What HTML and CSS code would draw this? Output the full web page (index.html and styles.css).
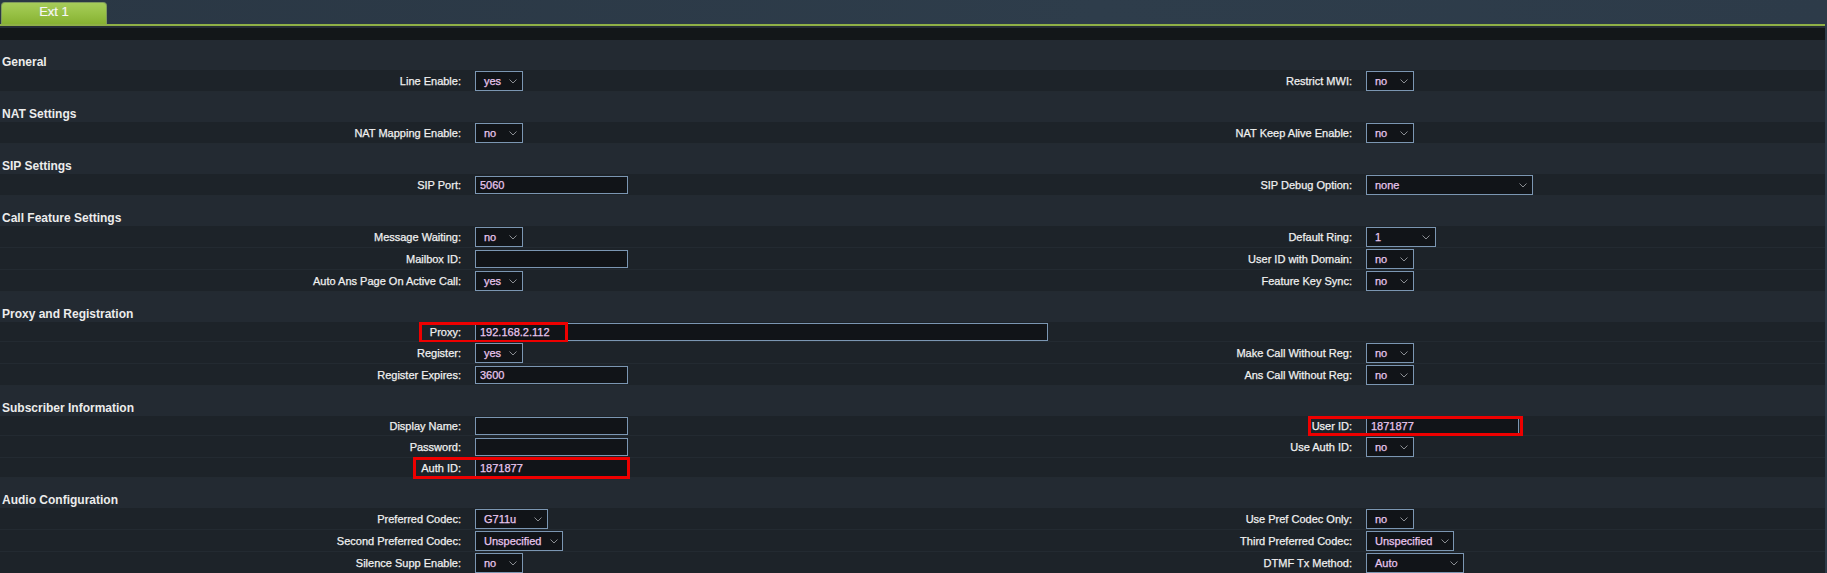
FILE: index.html
```html
<!DOCTYPE html>
<html>
<head>
<meta charset="utf-8">
<title>Ext 1</title>
<link rel="stylesheet" href="styles.css">
</head>
<body>
<div class="page">
  <div class="tabbar"><div class="tab">Ext 1</div></div>
  <div class="greenline"></div>
  <div class="gapline"></div>
  <div class="band"></div>
  <div class="form">

    <div class="sec">General</div>
    <div class="row">
      <div class="lbl">Line Enable:</div>
      <div class="fld"><span class="sel w48"><span>yes</span><svg class="chev" viewBox="0 0 8 5"><path d="M0.5 0.5 L4 4 L7.5 0.5"/></svg></span></div>
      <div class="lbl">Restrict MWI:</div>
      <div class="fld"><span class="sel w48"><span>no</span><svg class="chev" viewBox="0 0 8 5"><path d="M0.5 0.5 L4 4 L7.5 0.5"/></svg></span></div>
    </div>

    <div class="sec">NAT Settings</div>
    <div class="row">
      <div class="lbl">NAT Mapping Enable:</div>
      <div class="fld"><span class="sel w48"><span>no</span><svg class="chev" viewBox="0 0 8 5"><path d="M0.5 0.5 L4 4 L7.5 0.5"/></svg></span></div>
      <div class="lbl">NAT Keep Alive Enable:</div>
      <div class="fld"><span class="sel w48"><span>no</span><svg class="chev" viewBox="0 0 8 5"><path d="M0.5 0.5 L4 4 L7.5 0.5"/></svg></span></div>
    </div>

    <div class="sec">SIP Settings</div>
    <div class="row">
      <div class="lbl">SIP Port:</div>
      <div class="fld"><input class="txt" type="text" value="5060"></div>
      <div class="lbl">SIP Debug Option:</div>
      <div class="fld"><span class="sel w167"><span>none</span><svg class="chev" viewBox="0 0 8 5"><path d="M0.5 0.5 L4 4 L7.5 0.5"/></svg></span></div>
    </div>

    <div class="sec">Call Feature Settings</div>
    <div class="row">
      <div class="lbl">Message Waiting:</div>
      <div class="fld"><span class="sel w48"><span>no</span><svg class="chev" viewBox="0 0 8 5"><path d="M0.5 0.5 L4 4 L7.5 0.5"/></svg></span></div>
      <div class="lbl">Default Ring:</div>
      <div class="fld"><span class="sel w70"><span>1</span><svg class="chev" viewBox="0 0 8 5"><path d="M0.5 0.5 L4 4 L7.5 0.5"/></svg></span></div>
    </div>
    <div class="row">
      <div class="lbl">Mailbox ID:</div>
      <div class="fld"><input class="txt" type="text" value=""></div>
      <div class="lbl">User ID with Domain:</div>
      <div class="fld"><span class="sel w48"><span>no</span><svg class="chev" viewBox="0 0 8 5"><path d="M0.5 0.5 L4 4 L7.5 0.5"/></svg></span></div>
    </div>
    <div class="row">
      <div class="lbl">Auto Ans Page On Active Call:</div>
      <div class="fld"><span class="sel w48"><span>yes</span><svg class="chev" viewBox="0 0 8 5"><path d="M0.5 0.5 L4 4 L7.5 0.5"/></svg></span></div>
      <div class="lbl">Feature Key Sync:</div>
      <div class="fld"><span class="sel w48"><span>no</span><svg class="chev" viewBox="0 0 8 5"><path d="M0.5 0.5 L4 4 L7.5 0.5"/></svg></span></div>
    </div>

    <div class="sec">Proxy and Registration</div>
    <div class="row">
      <div class="lbl">Proxy:</div>
      <div class="fld"><input class="txt wide" type="text" value="192.168.2.112"></div>
      <div class="lbl"></div>
      <div class="fld"></div>
      <div class="mark mark-proxy"></div>
    </div>
    <div class="row">
      <div class="lbl">Register:</div>
      <div class="fld"><span class="sel w48"><span>yes</span><svg class="chev" viewBox="0 0 8 5"><path d="M0.5 0.5 L4 4 L7.5 0.5"/></svg></span></div>
      <div class="lbl">Make Call Without Reg:</div>
      <div class="fld"><span class="sel w48"><span>no</span><svg class="chev" viewBox="0 0 8 5"><path d="M0.5 0.5 L4 4 L7.5 0.5"/></svg></span></div>
    </div>
    <div class="row">
      <div class="lbl">Register Expires:</div>
      <div class="fld"><input class="txt" type="text" value="3600"></div>
      <div class="lbl">Ans Call Without Reg:</div>
      <div class="fld"><span class="sel w48"><span>no</span><svg class="chev" viewBox="0 0 8 5"><path d="M0.5 0.5 L4 4 L7.5 0.5"/></svg></span></div>
    </div>

    <div class="sec">Subscriber Information</div>
    <div class="row">
      <div class="lbl">Display Name:</div>
      <div class="fld"><input class="txt" type="text" value=""></div>
      <div class="lbl">User ID:</div>
      <div class="fld"><input class="txt" type="text" value="1871877"></div>
      <div class="mark mark-user"></div>
    </div>
    <div class="row">
      <div class="lbl">Password:</div>
      <div class="fld"><input class="txt" type="password" value=""></div>
      <div class="lbl">Use Auth ID:</div>
      <div class="fld"><span class="sel w48"><span>no</span><svg class="chev" viewBox="0 0 8 5"><path d="M0.5 0.5 L4 4 L7.5 0.5"/></svg></span></div>
    </div>
    <div class="row">
      <div class="lbl">Auth ID:</div>
      <div class="fld"><input class="txt" type="text" value="1871877"></div>
      <div class="lbl"></div>
      <div class="fld"></div>
      <div class="mark mark-auth"></div>
    </div>

    <div class="sec">Audio Configuration</div>
    <div class="row">
      <div class="lbl">Preferred Codec:</div>
      <div class="fld"><span class="sel w73"><span>G711u</span><svg class="chev" viewBox="0 0 8 5"><path d="M0.5 0.5 L4 4 L7.5 0.5"/></svg></span></div>
      <div class="lbl">Use Pref Codec Only:</div>
      <div class="fld"><span class="sel w48"><span>no</span><svg class="chev" viewBox="0 0 8 5"><path d="M0.5 0.5 L4 4 L7.5 0.5"/></svg></span></div>
    </div>
    <div class="row">
      <div class="lbl">Second Preferred Codec:</div>
      <div class="fld"><span class="sel w88"><span>Unspecified</span><svg class="chev" viewBox="0 0 8 5"><path d="M0.5 0.5 L4 4 L7.5 0.5"/></svg></span></div>
      <div class="lbl">Third Preferred Codec:</div>
      <div class="fld"><span class="sel w88"><span>Unspecified</span><svg class="chev" viewBox="0 0 8 5"><path d="M0.5 0.5 L4 4 L7.5 0.5"/></svg></span></div>
    </div>
    <div class="row">
      <div class="lbl">Silence Supp Enable:</div>
      <div class="fld"><span class="sel w48"><span>no</span><svg class="chev" viewBox="0 0 8 5"><path d="M0.5 0.5 L4 4 L7.5 0.5"/></svg></span></div>
      <div class="lbl">DTMF Tx Method:</div>
      <div class="fld"><span class="sel w98"><span>Auto</span><svg class="chev" viewBox="0 0 8 5"><path d="M0.5 0.5 L4 4 L7.5 0.5"/></svg></span></div>
    </div>
  </div>
</div>
</body>
</html>
```

FILE: styles.css
```css
html, body {
  margin: 0;
  padding: 0;
}

body {
  background: linear-gradient(90deg, #2a3744 0%, #2e3d4b 60%, #2d3b49 100%);
  font-family: "Liberation Sans", Arial, sans-serif;
  font-size: 11px;
  color: #ececec;
  overflow: hidden;
}

.page {
  width: 1825px;
}

.tabbar {
  height: 24px;
  padding-left: 1px;
  display: flex;
  align-items: flex-end;
  box-sizing: border-box;
}

.tab {
  width: 106px;
  height: 22px;
  box-sizing: border-box;
  border: 1px solid #7f9a5c;
  border-bottom: none;
  border-radius: 4px 4px 0 0;
  background: linear-gradient(180deg, #a6cc5a 0%, #97c145 50%, #87b132 100%);
  color: #f6f6f6;
  font-size: 13px;
  line-height: 18px;
  text-align: center;
  -webkit-text-stroke: 0.2px #f6f6f6;
}

.greenline {
  height: 2px;
  background: #8fb046;
}

.gapline {
  height: 2px;
  background: #262e35;
}

.band {
  height: 12px;
  background: #131719;
}

.form {
  background: #232a32;
  padding-bottom: 40px;
}

.sec {
  height: 30px;
  box-sizing: border-box;
  padding: 15px 0 0 2px;
  font-size: 12px;
  line-height: 14px;
  font-weight: bold;
  color: #ececec;
}

.row {
  position: relative;
  display: grid;
  grid-template-columns: 468px 445px 446px 466px;
  align-items: center;
  padding-top: 1px;
  border-bottom: 1px solid #232a31;
  background: #1d2329;
}

.lbl {
  text-align: right;
  padding-right: 7px;
  white-space: nowrap;
  line-height: 13px;
  color: #f0f0f0;
  -webkit-text-stroke: 0.25px #f0f0f0;
}

.fld {
  padding-left: 7px;
  display: flex;
  align-items: center;
  min-width: 0;
}

.sel {
  display: inline-flex;
  align-items: center;
  justify-content: space-between;
  height: 20px;
  box-sizing: border-box;
  border: 1px solid #7b96b2;
  background: #111418;
  color: #e8c6ee;
  padding: 0 5px 0 8px;
  line-height: 13px;
  -webkit-text-stroke: 0.25px #e8c6ee;
}

.w48 { width: 48px; }
.w70 { width: 70px; }
.w73 { width: 73px; }
.w88 { width: 88px; padding-right: 4px; }
.w98 { width: 98px; }
.w167 { width: 167px; }

.chev {
  width: 8px;
  height: 5px;
  flex: none;
}

.chev path {
  fill: none;
  stroke: #8a8d92;
  stroke-width: 1;
}

.txt {
  display: block;
  width: 153px;
  height: 18px;
  box-sizing: border-box;
  margin: 0;
  border: 1px solid #7b96b2;
  background: #111418;
  color: #e8c6ee;
  font-family: "Liberation Sans", Arial, sans-serif;
  font-size: 11px;
  padding: 0 4px;
  outline: none;
  flex: none;
  -webkit-text-stroke: 0.25px #e8c6ee;
}

.txt.wide {
  width: 573px;
}

.mark {
  position: absolute;
  box-sizing: border-box;
  border: 3px solid #ee0000;
  pointer-events: none;
}

.mark-proxy {
  left: 419px;
  top: 0;
  width: 149px;
  height: 21px;
}

.mark-user {
  left: 1308px;
  top: 0;
  width: 215px;
  height: 20px;
}

.mark-auth {
  left: 413px;
  top: -1px;
  width: 217px;
  height: 22px;
}
```
